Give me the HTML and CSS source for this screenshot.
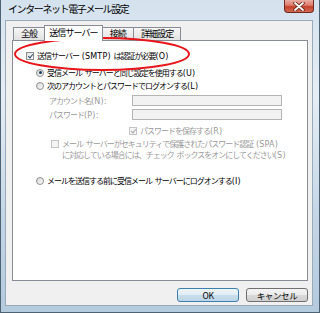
FILE: index.html
```html
<!DOCTYPE html>
<html lang="ja">
<head>
  <meta charset="UTF-8" />
  <title>インターネット電子メール設定</title>
  <link rel="stylesheet" href="styles.css">
</head>
<body>
  <div class="window">
    <div class="titlebar">
      <span class="title">インターネット電子メール設定</span>
      <div class="close">
        <svg width="12" height="9" viewBox="0 0 12 9">
          <path d="M2 1 L10 8 M10 1 L2 8" stroke="#5a2218" stroke-width="3.4" stroke-linecap="round" />
          <path d="M2 1 L10 8 M10 1 L2 8" stroke="#fff" stroke-width="1.8" stroke-linecap="round" />
        </svg>
      </div>
    </div>

    <div class="client">
      <div class="tabs">
        <div class="tab">全般</div>
        <div class="tab active">送信サーバー</div>
        <div class="tab">接続</div>
        <div class="tab">詳細設定</div>
      </div>

      <div class="panel">
        <div class="row r-auth">
          <span class="check on"></span>
          <span>送信サーバー<span class="lat"> (SMTP) </span>は認証が必要<span class="lat">(O)</span></span>
        </div>
        <div class="row r-same">
          <span class="radio on"></span>
          <span>受信メール<span class="lat"> </span>サーバーと同じ設定を使用する<span class="lat">(U)</span></span>
        </div>
        <div class="row r-next">
          <span class="radio"></span>
          <span>次のアカウントとパスワードでログオンする<span class="lat">(L)</span></span>
        </div>
        <div class="row field r-account">
          <span class="label">アカウント名<span class="lat">(N):</span></span>
          <span class="input"></span>
        </div>
        <div class="row field r-pass">
          <span class="label">パスワード<span class="lat">(P):</span></span>
          <span class="input"></span>
        </div>
        <div class="row disabled r-save">
          <span class="check on off"></span>
          <span>パスワードを保存する<span class="lat">(R)</span></span>
        </div>
        <div class="row disabled r-spa">
          <span class="check off"></span>
          <span class="lines">
            <span>メール<span class="lat"> </span>サーバーがセキュリティで保護されたパスワード認証<span class="lat"> (SPA)</span></span>
            <span>に対応している場合には、チェック<span class="lat"> </span>ボックスをオンにしてください<span class="lat">(S)</span></span>
          </span>
        </div>
        <div class="row r-before">
          <span class="radio"></span>
          <span>メールを送信する前に受信メール<span class="lat"> </span>サーバーにログオンする<span class="lat">(I)</span></span>
        </div>
      </div>

      <div class="buttons">
        <button class="btn default">OK</button>
        <button class="btn">キャンセル</button>
      </div>
    </div>

    <!-- red mark drawn over the dialog -->
    <svg class="mark" width="320" height="313" viewBox="0 0 320 313">
      <ellipse cx="101" cy="54" rx="87" ry="16" fill="none" stroke="#e8161a" stroke-width="2" />
    </svg>
  </div>
</body>
</html>
```

FILE: styles.css
```css
body {
  margin: 0;
  font-family: "Noto Sans CJK JP", sans-serif;
  color: #000;
}

.window {
  position: relative;
  width: 320px;
  height: 313px;
  box-sizing: border-box;
  border: 1px solid #4d6272;
  border-top: none;
  background: linear-gradient(180deg, #d4e2ee 0%, #e6eef5 30%, #c3d6e6 70%, #b4cadd 100%);
  overflow: hidden;
}

.titlebar {
  height: 20px;
  display: flex;
  align-items: flex-start;
  justify-content: space-between;
  padding-left: 7px;
  padding-right: 5px;
}

.title {
  font-size: 10px;
  letter-spacing: -1.4px;
  line-height: 18px;
}

.close {
  width: 30px;
  height: 13px;
  box-sizing: border-box;
  border: 1px solid #6e2a20;
  border-top: none;
  border-radius: 0 0 4px 4px;
  background: linear-gradient(180deg, #eab0a4 0%, #dc7866 45%, #c2412c 55%, #d46a52 100%);
  display: flex;
  align-items: center;
  justify-content: center;
}

.client {
  margin: 0 6px 0 4px;
  height: 286px;
  box-sizing: border-box;
  background: #f0f0f0;
  border: 1px solid #9aaab8;
  padding: 4px 4px 0 6px;
}

.tabs {
  display: flex;
  align-items: flex-end;
  height: 15px;
  padding-left: 1px;
}

.tab {
  height: 13px;
  box-sizing: border-box;
  padding: 0 7px;
  font-size: 9px;
  letter-spacing: -0.9px;
  line-height: 12px;
  border: 1px solid #898c95;
  border-bottom: none;
  margin-right: -1px;
  background: linear-gradient(180deg, #f6f6f6, #e2e2e2);
}

.tab.active {
  height: 16px;
  line-height: 14px;
  background: #fff;
  position: relative;
  z-index: 1;
  margin-bottom: -1px;
  padding: 0 4px;
}

.panel {
  height: 241px;
  box-sizing: border-box;
  background: #fff;
  border: 1px solid #898c95;
  padding-top: 8px;
  font-size: 8px;
  letter-spacing: -1px;
}

.lat {
  font-family: "DejaVu Sans", sans-serif;
  font-size: 8px;
  letter-spacing: 0.2px;
  white-space: pre;
}

.row {
  display: flex;
  align-items: center;
  height: 13px;
  white-space: nowrap;
  gap: 3px;
}

.r-auth { padding-left: 13px; }
.r-same { padding-left: 23px; margin-top: 4px; }
.r-next { padding-left: 23px; }
.r-account { margin-top: 2px; }
.r-pass { margin-top: 1px; }
.r-save { padding-left: 116px; margin-top: 3px; }
.r-spa {
  padding-left: 38px;
  margin-top: 2px;
  height: 22px;
  align-items: flex-start;
}
.r-before { padding-left: 23px; margin-top: 13px; }

.field {
  padding-left: 36px;
  gap: 0;
}

.field .label {
  width: 83px;
  color: #9a9a9a;
}

.input {
  width: 150px;
  height: 11px;
  box-sizing: border-box;
  border: 1px solid #b4b4b4;
  background: #f2f2f2;
}

.disabled {
  color: #9a9a9a;
}

.lines {
  display: flex;
  flex-direction: column;
  line-height: 10px;
}

.check {
  width: 8px;
  height: 8px;
  box-sizing: border-box;
  border: 1px solid #8e8f8f;
  background: linear-gradient(135deg, #e4e4e4, #fafafa);
  flex: none;
  position: relative;
}

.r-spa .check { margin-top: 1px; }

.check.on::after {
  content: "";
  position: absolute;
  left: 1.5px;
  top: 0;
  width: 2px;
  height: 4px;
  border: solid #2c4a6a;
  border-width: 0 1.5px 1.5px 0;
  transform: rotate(40deg);
}

.check.off {
  border-color: #c4c4c4;
  background: #f4f4f4;
}

.check.on.off::after {
  border-color: #a8a8a8;
}

.radio {
  width: 8px;
  height: 8px;
  box-sizing: border-box;
  border: 1px solid #8e8f8f;
  border-radius: 50%;
  background: linear-gradient(135deg, #d8d8d8, #fbfbfb);
  flex: none;
  position: relative;
}

.radio.on::after {
  content: "";
  position: absolute;
  left: 1.5px;
  top: 1.5px;
  width: 3px;
  height: 3px;
  border-radius: 50%;
  background: #1c3c5c;
}

.buttons {
  display: flex;
  justify-content: flex-end;
  gap: 7px;
  margin-top: 7px;
}

.btn {
  width: 62px;
  height: 14px;
  padding: 0;
  font-family: "Noto Sans CJK JP", sans-serif;
  font-size: 8.5px;
  letter-spacing: -0.4px;
  line-height: 12px;
  border: 1px solid #707070;
  border-radius: 3px;
  background: linear-gradient(180deg, #f4f4f4 0%, #ebebeb 50%, #dadada 51%, #cfcfcf 100%);
  color: #000;
}

.btn.default {
  border-color: #3c7fb1;
  background: linear-gradient(180deg, #eef5fa 0%, #e0ecf5 50%, #cadeec 51%, #bcd5e6 100%);
}

.mark {
  position: absolute;
  left: 0;
  top: 0;
  pointer-events: none;
}
```
